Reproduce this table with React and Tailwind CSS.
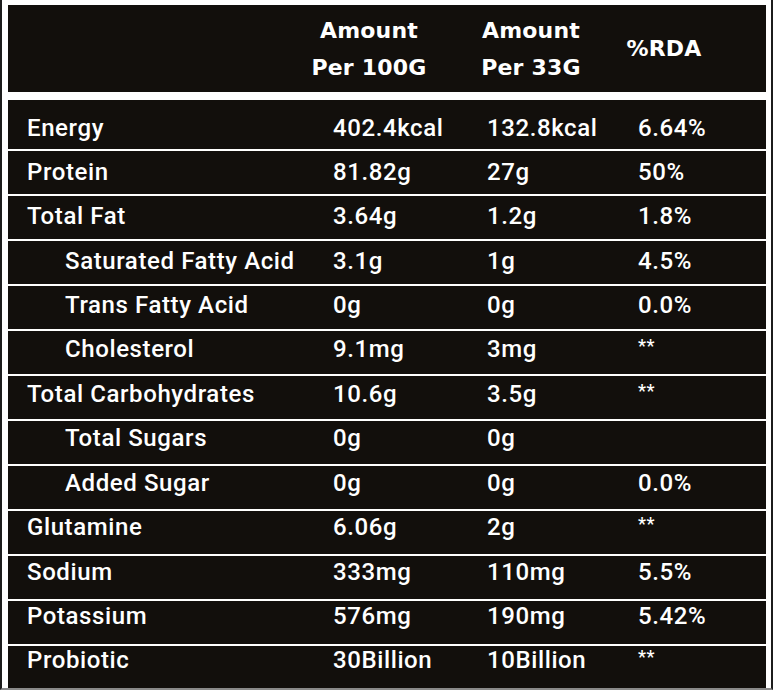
const rows = [
  { name: "Energy", per100: "402.4kcal", per33: "132.8kcal", rda: "6.64%", h: "h-[49px] pt-[14px]" },
  { name: "Protein", per100: "81.82g", per33: "27g", rda: "50%", h: "h-[43px] pt-[7px]" },
  { name: "Total Fat", per100: "3.64g", per33: "1.2g", rda: "1.8%", h: "h-[43px] pt-[6px]" },
  { name: "Saturated Fatty Acid", per100: "3.1g", per33: "1g", rda: "4.5%", h: "h-[43px] pt-[6px]", sub: true },
  { name: "Trans Fatty Acid", per100: "0g", per33: "0g", rda: "0.0%", h: "h-[43px] pt-[5px]", sub: true },
  { name: "Cholesterol", per100: "9.1mg", per33: "3mg", rda: "**", h: "h-[43px] pt-[4px]", sub: true },
  { name: "Total Carbohydrates", per100: "10.6g", per33: "3.5g", rda: "**", h: "h-[43px] pt-[4px]" },
  { name: "Total Sugars", per100: "0g", per33: "0g", rda: "", h: "h-[43px] pt-[3px]", sub: true },
  { name: "Added Sugar", per100: "0g", per33: "0g", rda: "0.0%", h: "h-[43px] pt-[3px]", sub: true },
  { name: "Glutamine", per100: "6.06g", per33: "2g", rda: "**", h: "h-[43px] pt-[2px]" },
  { name: "Sodium", per100: "333mg", per33: "110mg", rda: "5.5%", h: "h-[43px] pt-[2px]" },
  { name: "Potassium", per100: "576mg", per33: "190mg", rda: "5.42%", h: "h-[43px] pt-[1px]" },
  { name: "Probiotic", per100: "30Billion", per33: "10Billion", rda: "**", h: "h-[42px] pt-0" },
];

const Stars = () => <span className="relative -top-[5px] text-[18px]">**</span>;

export default function App() {
  return (
    <div className="min-h-screen bg-white">
      <div className="w-[773px] border-x-2 border-b-2 border-l-[#1c1c1c] border-r-[#1c1c1c] border-b-[#8a8a8a] pl-[6px] pr-[5px] pt-[5px]">
        {/* шапка таблицы */}
        <div
          className="flex h-[87px] items-center bg-[#120f0c] text-white font-bold text-[22px] leading-[37px] tracking-[0.2px]"
          style={{ fontFamily: '"DejaVu Sans", "Open Sans", sans-serif' }}
        >
          <div className="w-[284px]" />
          <div className="w-[154px] text-center">
            Amount
            <br />
            Per 100G
          </div>
          <div className="w-[170px] text-center">
            Amount
            <br />
            Per 33G
          </div>
          <div className="w-[96px] text-center">%RDA</div>
        </div>

        <div
          className="mt-[8px] flex flex-col gap-[2px] text-white font-medium text-[24px] leading-[28px] tracking-[0.6px]"
          style={{ fontFamily: 'Roboto, "Liberation Sans", sans-serif' }}
        >
          {rows.map((r) => (
            <div key={r.name} className={`grid grid-cols-[325px_154px_151px_1fr] bg-[#120f0c] ${r.h}`}>
              <div className={r.sub ? "pl-[57px]" : "pl-[19px]"}>{r.name}</div>
              <div>{r.per100}</div>
              <div>{r.per33}</div>
              <div>{r.rda === "**" ? <Stars /> : r.rda}</div>
            </div>
          ))}
        </div>
      </div>
    </div>
  );
}
